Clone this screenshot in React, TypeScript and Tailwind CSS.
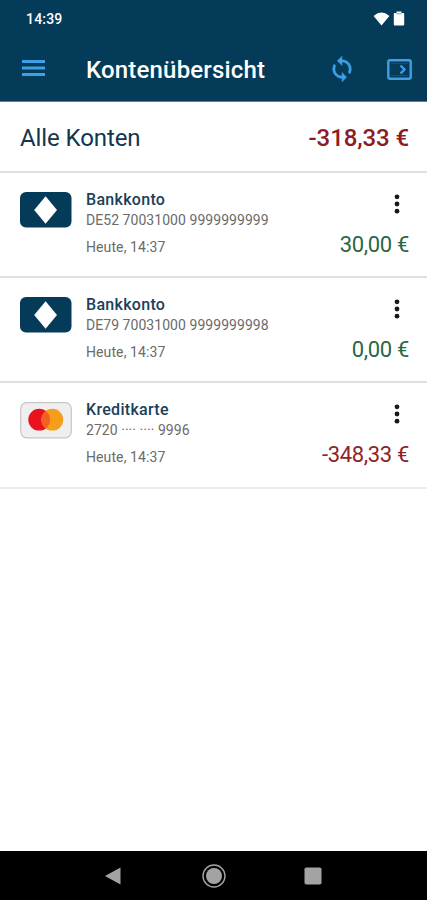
type Account = {
  name: string;
  number: string;
  updated: string;
  amount: string;
  negative?: boolean;
  card: 'bank' | 'credit';
};

const ACCOUNTS: Account[] = [
  { name: 'Bankkonto', number: 'DE52 70031000 9999999999', updated: 'Heute, 14:37', amount: '30,00 €', card: 'bank' },
  { name: 'Bankkonto', number: 'DE79 70031000 9999999998', updated: 'Heute, 14:37', amount: '0,00 €', card: 'bank' },
  { name: 'Kreditkarte', number: '2720 ···· ···· 9996', updated: 'Heute, 14:37', amount: '-348,33 €', negative: true, card: 'credit' },
];

function StatusBar() {
  return (
    <div className="flex h-[37px] items-center justify-between pl-[26px] pr-[22px] text-white">
      <span className="text-[14px] font-medium leading-5 tracking-[0.2px]">14:39</span>
      <div className="flex items-center gap-[3px]">
        <svg width="17" height="14" viewBox="0 0 17 14" fill="currentColor">
          <path d="M0.6 4 Q8.5 -2.8 16.4 4 L8.5 13.6 Z" />
        </svg>
        <svg width="12" height="15" viewBox="0 0 12 15" fill="currentColor">
          <path d="M3.5 0.5h5v1.5h1.7a1 1 0 0 1 1 1v10.5a1 1 0 0 1-1 1H1.8a1 1 0 0 1-1-1V3a1 1 0 0 1 1-1h1.7z" />
          <path d="M3.2 2h5.6v1.4H3.2z" fill="#a9bcc8" />
        </svg>
      </div>
    </div>
  );
}

function Toolbar() {
  return (
    <div className="flex h-[64px] items-center pl-[22px] pr-[15px] text-[#3f9fe4]">
      <button aria-label="Menü" className="pb-[1.4px]">
        <svg width="23" height="16" viewBox="0 0 23 16" fill="currentColor">
          <path d="M0 0h23v3H0zM0 6.5h23v3H0zM0 13h23v3H0z" />
        </svg>
      </button>
      <h1 className="ml-[41px] flex-1 pt-0.5 text-[24px] font-medium leading-8 tracking-[0.18px] text-white">Kontenübersicht</h1>
      <button aria-label="Aktualisieren">
        <svg width="28" height="28" viewBox="0 0 24 24" fill="currentColor" stroke="currentColor" strokeWidth="0.4">
          <path d="M12 4V1L8 5l4 4V6c3.31 0 6 2.69 6 6 0 1.01-.25 1.97-.7 2.8l1.46 1.46A7.93 7.93 0 0 0 20 12c0-4.42-3.58-8-8-8zm0 14c-3.31 0-6-2.69-6-6 0-1.01.25-1.97.7-2.8L5.24 7.74A7.93 7.93 0 0 0 4 12c0 4.42 3.58 8 8 8v3l4-4-4-4v3z" />
        </svg>
      </button>
      <button aria-label="Abmelden" className="ml-[31px]">
        <svg width="25" height="21" viewBox="0 0 25 21" fill="none" stroke="currentColor" strokeWidth="2.4">
          <rect x="1.3" y="1.3" width="22.4" height="18.4" rx="1.6" />
          <path d="M13.5 6.5l4 4-4 4" />
          <path d="M4 4.6h17M4 16.4h17" strokeWidth="1" opacity="0.25" />
        </svg>
      </button>
    </div>
  );
}

function CardIcon({ card }: { card: Account['card'] }) {
  if (card === 'credit') {
    return (
      <svg width="52" height="37" viewBox="0 0 52 37">
        <rect x="0.7" y="0.6" width="50.6" height="35.2" rx="6" fill="#f0efef" stroke="#c6c6c8" strokeWidth="1.2" />
        <circle cx="19.2" cy="17.7" r="10.9" fill="#e9131d" />
        <circle cx="32.3" cy="17.7" r="10.9" fill="#f79d1c" />
        <path d="M25.75 9a10.9 10.9 0 0 1 0 17.4a10.9 10.9 0 0 1 0-17.4z" fill="#f26122" />
      </svg>
    );
  }
  return (
    <svg width="52" height="36" viewBox="0 0 52 36">
      <rect width="51.5" height="35.5" rx="6" fill="#043b58" />
      <path d="M25.6 4.2L37 18 25.6 31.8 14.2 18z" fill="#fff" />
    </svg>
  );
}

function AccountRow({ account }: { account: Account }) {
  return (
    <li className="flex h-[105px] border-b-2 border-[#e0e0e0] pl-5 pr-[18px] last:h-[106px] last:border-[#ebebeb]">
      <div className="w-[66px] shrink-0 pt-[19px]">
        <CardIcon card={account.card} />
      </div>
      <div className="flex-1 whitespace-nowrap pt-4">
        <h2 className="text-[16px] font-medium leading-[22px] tracking-[0.3px] text-[#1b4059]">{account.name}</h2>
        <p className="-mt-px text-[14px] leading-5 tracking-[0.05px] text-[#6b6b6b]">{account.number}</p>
        <p className="mt-[7px] text-[14px] leading-5 tracking-[0.1px] text-[#6b6b6b]">{account.updated}</p>
      </div>
      <div className="flex flex-col items-end pt-[21px]">
        <button aria-label="Mehr" className="mr-[9px]">
          <svg width="6" height="20" viewBox="0 0 6 20" fill="#16181c">
            <circle cx="3" cy="2.8" r="2.4" />
            <circle cx="3" cy="10" r="2.4" />
            <circle cx="3" cy="17.2" r="2.4" />
          </svg>
        </button>
        <span className={`mt-[17px] whitespace-nowrap text-[22px] leading-7 tracking-[-0.33px] ${account.negative ? 'text-[#8c2428]' : 'text-[#2a6745]'}`}>
          {account.amount}
        </span>
      </div>
    </li>
  );
}

function NavBar() {
  return (
    <nav className="flex h-[49px] items-center justify-between bg-black px-[105px] text-[#a3a3a3]">
      <svg width="16" height="18" viewBox="0 0 16 18" fill="currentColor">
        <path d="M15.5 0.5v17L0.8 9.6a0.7 0.7 0 0 1 0-1.2z" />
      </svg>
      <svg className="ml-0.5" width="24" height="24" viewBox="0 0 24 24" fill="currentColor">
        <circle cx="12" cy="12" r="11" fill="none" stroke="currentColor" strokeWidth="1.4" />
        <circle cx="12" cy="12" r="8" />
      </svg>
      <svg width="18" height="18" viewBox="0 0 18 18" fill="currentColor">
        <rect x="0.5" y="0.5" width="17" height="17" rx="1.8" />
      </svg>
    </nav>
  );
}

export default function App() {
  return (
    <div className="flex h-[900px] w-[427px] flex-col overflow-hidden bg-white font-[Roboto,sans-serif]">
      <header className="border-b border-[#5f7f93] bg-[#043b58]">
        <StatusBar />
        <Toolbar />
      </header>
      <main className="flex-1">
        <div className="flex h-[71px] items-center justify-between border-b-2 border-[#e0e0e0] pl-5 pr-[18px] pt-0.5 text-[24px] leading-8">
          <span className="tracking-[-0.1px] text-[#123650]">Alle Konten</span>
          <span className="font-medium tracking-[-0.1px] text-[#8c1c1f]">-318,33 €</span>
        </div>
        <ul>
          {ACCOUNTS.map((account) => (
            <AccountRow key={account.number} account={account} />
          ))}
        </ul>
      </main>
      <NavBar />
    </div>
  );
}
